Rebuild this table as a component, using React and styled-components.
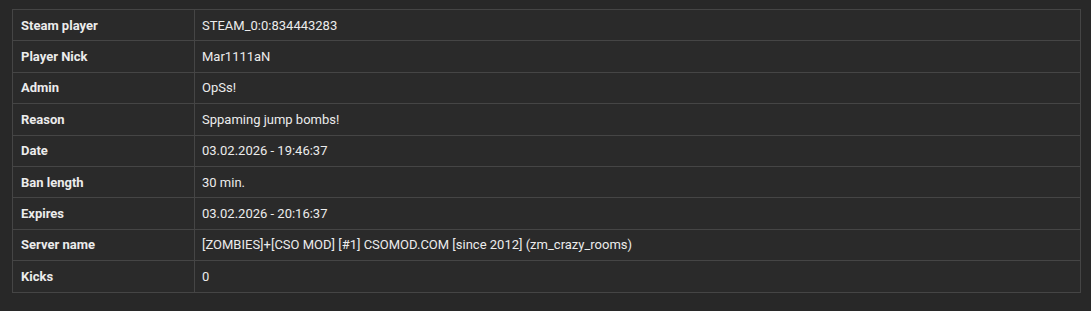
import React from 'react';
import styled, { createGlobalStyle } from 'styled-components';

const GlobalStyle = createGlobalStyle`
    body {
        margin: 0;
        background: #282828;
        font-family: Roboto, "Liberation Sans", sans-serif;
    }
`

const Page = styled.div`
    padding: 9px 10px 18px 12px;
`
const Table = styled.table`
    width: 100%;
    border-collapse: collapse;
    background: #2a2a2a;
    border: 1px solid #454545;
    font-size: 13px;
    color: #ececec;
`
const Row = styled.tr`
    height: 31.4px;
    border-bottom: 1px solid #454545;
`
const Label = styled.td`
    width: 165px;
    padding: 0 8px;
    font-weight: 700;
    border-right: 1px solid #454545;
`
const Value = styled.td`
    padding: 0 7px;
`

const rows = [
    ['Steam player', 'STEAM_0:0:834443283'],
    ['Player Nick', 'Mar1111aN'],
    ['Admin', 'OpSs!'],
    ['Reason', 'Sppaming jump bombs!'],
    ['Date', '03.02.2026 - 19:46:37'],
    ['Ban length', '30 min.'],
    ['Expires', '03.02.2026 - 20:16:37'],
    ['Server name', '[ZOMBIES]+[CSO MOD] [#1] CSOMOD.COM [since 2012] (zm_crazy_rooms)'],
    ['Kicks', '0'],
];

export default function App() {
    return (
        <Page>
            <GlobalStyle />
            <Table>
                <tbody>
                    {rows.map(([label, value]) => (
                        <Row key={label}>
                            <Label>{label}</Label>
                            <Value>{value}</Value>
                        </Row>
                    ))}
                </tbody>
            </Table>
        </Page>
    );
}
